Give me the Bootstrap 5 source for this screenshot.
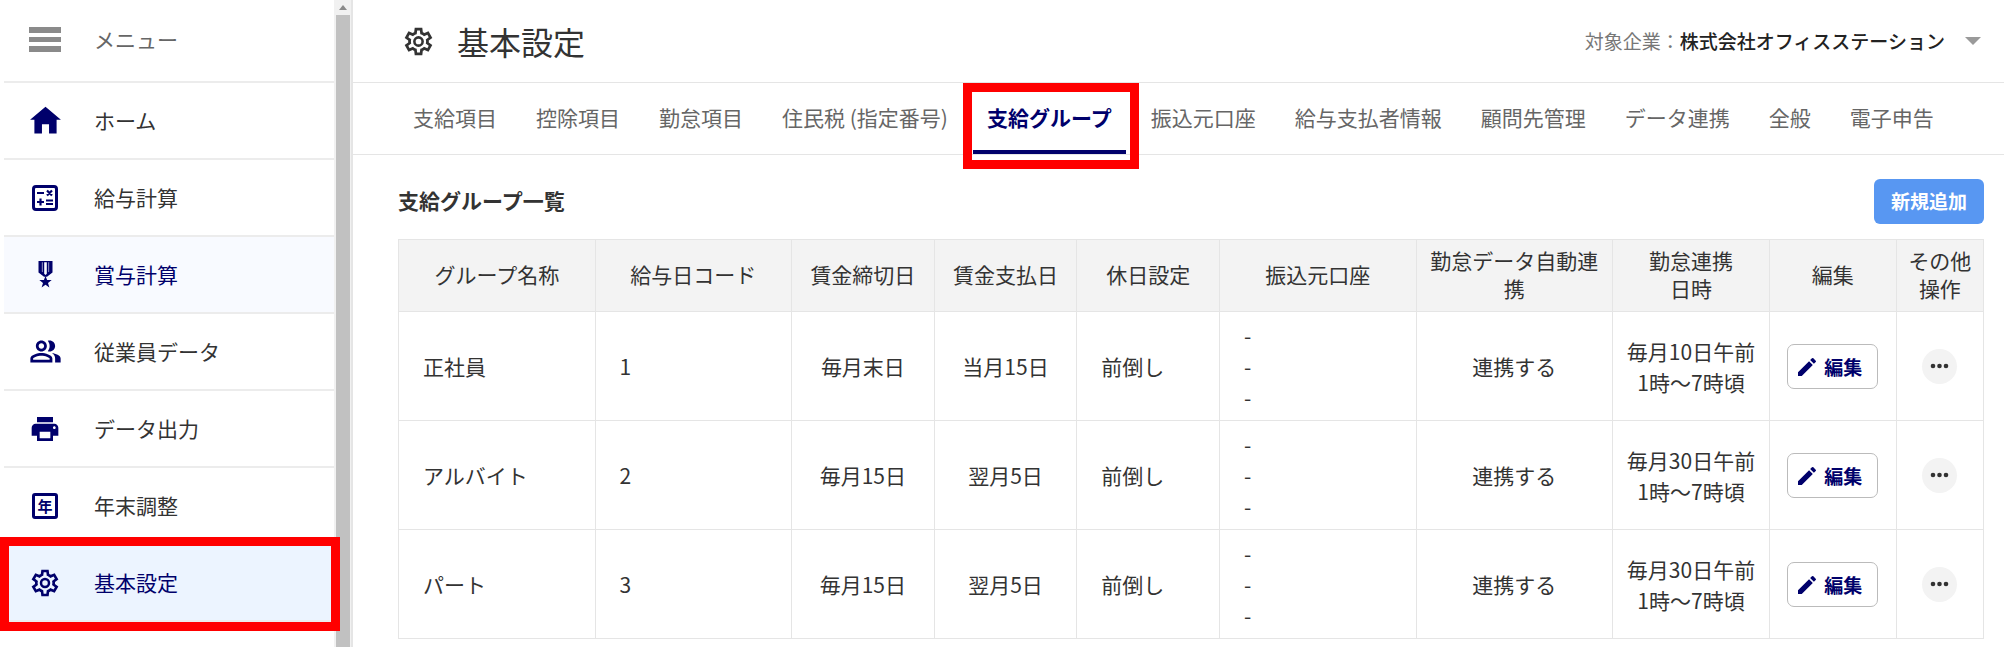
<!DOCTYPE html>
<html lang="ja">
<head>
<meta charset="utf-8">
<meta name="viewport" content="width=device-width, initial-scale=1">
<title>基本設定</title>
<link href="https://cdn.jsdelivr.net/npm/bootstrap@5.3.0/dist/css/bootstrap.min.css" rel="stylesheet">
<style>
  :root { --navy: #00006b; --line: #e5e5e5; --alert: #ff0000; }
  body { font-family: "Noto Sans CJK JP", "Noto Sans", sans-serif; font-size: 21px; line-height: 28px; color: #333; background: #fff; }
  svg { display: block; fill: currentColor; }

  /* sidebar */
  .side { width: 353px; border-right: 2px solid var(--line); }
  .side-list { padding-left: 4px; }
  .side-item { height: 77px; padding: 0 0 2px 22px; gap: 30px; border: 0; border-bottom: 2px solid #ececec; background: #fff; color: #333; text-decoration: none; text-align: left; }
  .side-item.side-top { height: 83px; padding-bottom: 4px; color: #666; }
  .side-item:hover, .side-item.is-hover { background: #f8faff; color: var(--navy); }
  .side-item.is-current { background: #ecf4ff; color: var(--navy); }
  .side-icon { width: 38px; padding-top: 2px; color: var(--navy); }
  .burger { width: 32px; height: 25px; color: #8a8a8a; }
  .year-icon { width: 26px; height: 26px; border: 3px solid var(--navy); border-radius: 3px; font-size: 15px; line-height: 19px; font-weight: 700; text-align: center; }
  .scroll-track { width: 17px; background: #f1f1f1; }
  .scroll-arrow { height: 15px; }
  .scroll-thumb { width: 14px; background: #c1c1c1; }

  /* red callout frames */
  .callout { position: absolute; border: 9px solid var(--alert); pointer-events: none; z-index: 2; }
  .callout-side { inset: -8px -6px -11px -4px; }
  .callout-tab { inset: 0 -13px -19px -10px; }

  /* header */
  .topbar { height: 83px; padding: 0 23px 0 49px; border-bottom: 1px solid var(--line); }
  .title-row { gap: 22px; }
  .page-title { font-size: 32px; line-height: 40px; font-weight: 400; color: #333; }
  .company { font-size: 19px; line-height: 28px; color: #777; }
  .company-name { color: #222; font-weight: 500; }

  /* tabs */
  .tabs { height: 72px; padding-left: 46px; gap: 11px; border-bottom: 1px solid var(--line); }
  .tab-link { padding: 0 14px 4px; color: #666; text-decoration: none; white-space: nowrap; }
  .tab-link.is-current { color: var(--navy); font-weight: 700; border-bottom: 4px solid var(--navy); padding-bottom: 0; }

  /* content */
  .content { padding: 24px 20px 0 45px; }
  .list-head { margin-bottom: 15px; }
  .list-title { font-size: 21px; line-height: 28px; font-weight: 700; padding-bottom: 3px; }
  .btn-add { height: 45px; padding: 0 17px 2px; border: 0; border-radius: 6px; background: #5897f2; color: #fff; font-size: 19px; line-height: 28px; font-weight: 700; }
  .btn-add:hover { background: #4585e0; color: #fff; }
  .grid-table { table-layout: fixed; border-collapse: collapse; color: #333; }
  .grid-table th, .grid-table td { border: 1px solid var(--line); vertical-align: middle; }
  .grid-table th { background: #f3f3f3; font-weight: 400; text-align: center; padding: 6px 12px 9px; }
  .grid-table td { padding: 8px 12px 7px; line-height: 31px; text-align: center; }
  .grid-table td.cell-start { padding-left: 24px; text-align: left; }
  .grid-table th.cell-tight, .grid-table td.cell-tight { padding-left: 4px; padding-right: 4px; }
  .w-name { width: 12.4%; } .w-day { width: 9%; } .w-time { width: 9.9%; } .w-edit { width: 8%; } .w-more { width: 5.5%; }
  .btn-edit { height: 45px; padding: 0 15px 0 7px; gap: 5px; border: 1px solid #bbb; border-radius: 7px; background: #fff; color: var(--navy); font-size: 19px; line-height: 28px; font-weight: 700; }
  .btn-edit:hover { background: #f8faff; color: var(--navy); border-color: #bbb; }
  .btn-more { width: 35px; height: 35px; padding: 0; border: 0; background: #f3f3f3; color: #333; }
</style>
</head>
<body>
<svg class="d-none" xmlns="http://www.w3.org/2000/svg">
  <symbol id="i-gear" viewBox="0 -960 960 960">
    <path fill-rule="evenodd" d="m370-80-16-128q-13-5-24.500-12T307-235l-119 50L78-375l103-78q-1-7-1-13.500v-27q0-6.500 1-13.500L78-585l110-190 119 50q11-8 23-15t24-12l16-128h220l16 128q13 5 24.500 12t22.500 15l119-50 110 190-103 78q1 7 1 13.500v27q0 6.500-2 13.500l103 78-110 190-118-50q-11 8-23 15t-24 12L590-80H370Zm70-80h79l14-106q31-8 57.500-23.500T639-327l99 41 39-68-86-65q5-14 7-29.500t2-31.500q0-16-2-31.500t-7-29.500l86-65-39-68-99 42q-22-23-48.500-38.500T533-694l-13-106h-79l-14 106q-31 8-57.500 23.500T321-633l-99-41-39 68 86 64q-5 15-7 30t-2 32q0 16 2 31t7 30l-86 65 39 68 99-42q22 23 48.500 38.500T427-266l13 106Z"/>
    <circle cx="480" cy="-480" r="120" fill="none" stroke="currentColor" stroke-width="75"/>
  </symbol>
  <symbol id="i-pen" viewBox="0 0 24 24"><path d="M3 17.250V21h3.750L17.810 9.940l-3.750-3.750L3 17.250zM20.710 7.040a1 1 0 000-1.410l-2.340-2.340a1 1 0 00-1.410 0l-1.830 1.830 3.750 3.750 1.830-1.830z"/></symbol>
  <symbol id="i-dots" viewBox="0 0 35 35"><circle cx="11" cy="17" r="2.300"/><circle cx="17.500" cy="17" r="2.300"/><circle cx="24" cy="17" r="2.300"/></symbol>
</svg>

<div class="d-flex min-vh-100">
  <aside class="side d-flex flex-shrink-0">
    <nav class="side-list flex-grow-1" aria-label="メインメニュー">
      <button type="button" class="side-item side-top d-flex align-items-center w-100">
        <span class="side-icon d-flex justify-content-center">
          <svg class="burger" viewBox="0 0 32 25"><path d="M0 0h32v6H0zM0 10h32v5H0zM0 19h32v6H0z"/></svg>
        </span>メニュー
      </button>
      <a href="#" class="side-item d-flex align-items-center">
        <span class="side-icon d-flex justify-content-center"><svg width="37" height="37" viewBox="0 0 24 24"><path d="M9.700 20.500v-6h4.600v6H19.200v-9H22L12 3 2 11.500h2.800v9z"/></svg></span>ホーム
      </a>
      <a href="#" class="side-item d-flex align-items-center">
        <span class="side-icon d-flex justify-content-center"><svg width="26" height="26" viewBox="0 0 26 26" fill="none" stroke="currentColor" stroke-width="2"><rect x="1.500" y="1.500" width="23" height="23" rx="2.500" fill="none" stroke-width="3"/><path d="M5 8h7M15 5.500l5 5M20 5.500l-5 5M8.500 13.500v7M5 17h7M14 15.500h7M14 19h7" stroke-width="2.200"/></svg></span>給与計算
      </a>
      <a href="#" class="side-item is-hover d-flex align-items-center">
        <span class="side-icon d-flex justify-content-center"><svg width="15" height="28" viewBox="0 0 15 28"><path fill-rule="evenodd" d="M.5 0h14v11.500L9 15.800H6L.5 11.500zM6.200 1.200v11.600L7.500 14l1.300-1.200V1.200zM3.900 1.200h.6v10l-.6-.5zM10.500 1.200h.6v9.500l-.6.500z"/><path d="M7.500 15l1.600 4h4.600l-3.700 2.900 1.400 4.700-3.900-2.800-3.900 2.800L5 21.900 1.300 19h4.600z"/></svg></span>賞与計算
      </a>
      <a href="#" class="side-item d-flex align-items-center">
        <span class="side-icon d-flex justify-content-center"><svg width="33" height="33" viewBox="0 0 24 24"><path fill-rule="evenodd" d="M16.670 13.130C18.040 14.060 19 15.320 19 17v3h4v-3c0-2.180-3.570-3.470-6.330-3.870zM15 12c2.210 0 4-1.790 4-4s-1.790-4-4-4c-.47 0-.91.1-1.330.24C14.500 5.270 15 6.580 15 8s-.5 2.730-1.330 3.760c.42.14.86.24 1.330.24zM9 12c2.210 0 4-1.790 4-4s-1.790-4-4-4-4 1.790-4 4 1.790 4 4 4zm0-6c1.100 0 2 .9 2 2s-.9 2-2 2-2-.9-2-2 .9-2 2-2zm0 7c-2.670 0-8 1.340-8 4v3h16v-3c0-2.660-5.330-4-8-4zm6 5H3v-.99C3.200 16.290 6.300 15 9 15s5.800 1.290 6 2v1z"/></svg></span>従業員データ
      </a>
      <a href="#" class="side-item d-flex align-items-center">
        <span class="side-icon d-flex justify-content-center"><svg width="32" height="32" viewBox="0 0 24 24"><path fill-rule="evenodd" d="M19 8H5c-1.660 0-3 1.340-3 3v6h4v4h12v-4h4v-6c0-1.660-1.340-3-3-3zm-3 11H8v-5h8v5zm3-7c-.55 0-1-.45-1-1s.45-1 1-1 1 .45 1 1-.45 1-1 1zm-1-9H6v4h12V3z"/></svg></span>データ出力
      </a>
      <a href="#" class="side-item d-flex align-items-center">
        <span class="side-icon d-flex justify-content-center"><span class="year-icon">年</span></span>年末調整
      </a>
      <a href="#" class="side-item is-current d-flex align-items-center position-relative" aria-current="page">
        <span class="side-icon d-flex justify-content-center"><svg width="32" height="32"><use href="#i-gear"/></svg></span>基本設定
        <span class="callout callout-side"></span>
      </a>
    </nav>
    <div class="scroll-track d-flex flex-column align-items-center" aria-hidden="true">
      <div class="scroll-arrow d-flex align-items-center"><svg width="8" height="5" viewBox="0 0 8 5" color="#8a8a8a"><path d="M4 0l4 5H0z"/></svg></div>
      <div class="scroll-thumb flex-grow-1"></div>
    </div>
  </aside>

  <main class="flex-grow-1 overflow-hidden">
    <header class="topbar d-flex align-items-center justify-content-between">
      <div class="title-row d-flex align-items-center">
        <svg width="33" height="33"><use href="#i-gear"/></svg>
        <h1 class="page-title mb-0">基本設定</h1>
      </div>
      <button type="button" class="company btn border-0 p-0 d-flex align-items-center">
        <span>対象企業：</span><span class="company-name me-3">株式会社オフィスステーション</span>
        <svg class="ms-1" width="16" height="8" viewBox="0 0 16 8" color="#9a9a9a"><path d="M0 0h16L8 8z"/></svg>
      </button>
    </header>

    <nav class="tabs d-flex align-items-stretch" aria-label="設定">
      <a href="#" class="tab-link d-flex align-items-center">支給項目</a>
      <a href="#" class="tab-link d-flex align-items-center">控除項目</a>
      <a href="#" class="tab-link d-flex align-items-center">勤怠項目</a>
      <a href="#" class="tab-link d-flex align-items-center">住民税 (指定番号)</a>
      <a href="#" class="tab-link is-current d-flex align-items-center position-relative" aria-current="page">支給グループ<span class="callout callout-tab"></span></a>
      <a href="#" class="tab-link d-flex align-items-center">振込元口座</a>
      <a href="#" class="tab-link d-flex align-items-center">給与支払者情報</a>
      <a href="#" class="tab-link d-flex align-items-center">顧問先管理</a>
      <a href="#" class="tab-link d-flex align-items-center">データ連携</a>
      <a href="#" class="tab-link d-flex align-items-center">全般</a>
      <a href="#" class="tab-link d-flex align-items-center">電子申告</a>
    </nav>

    <section class="content">
      <div class="list-head d-flex align-items-center justify-content-between">
        <h2 class="list-title mb-0">支給グループ一覧</h2>
        <button type="button" class="btn btn-add">新規追加</button>
      </div>
      <table class="grid-table w-100">
        <colgroup>
          <col class="w-name"><col class="w-name"><col class="w-day"><col class="w-day"><col class="w-day"><col class="w-name"><col class="w-name"><col class="w-time"><col class="w-edit"><col class="w-more">
        </colgroup>
        <thead>
          <tr>
            <th scope="col">グループ名称</th><th scope="col">給与日コード</th><th scope="col">賃金締切日</th><th scope="col">賃金支払日</th><th scope="col">休日設定</th><th scope="col">振込元口座</th><th scope="col">勤怠データ自動連携</th><th scope="col">勤怠連携<br>日時</th><th scope="col">編集</th><th scope="col" class="cell-tight">その他<br>操作</th>
          </tr>
        </thead>
        <tbody>
          <tr>
            <td class="cell-start">正社員</td><td class="cell-start">1</td><td>毎月末日</td><td>当月15日</td><td class="cell-start">前倒し</td><td class="cell-start">-<br>-<br>-</td><td>連携する</td><td>毎月10日午前<br>1時～7時頃</td>
            <td><button type="button" class="btn btn-edit d-inline-flex align-items-center"><svg width="24" height="24"><use href="#i-pen"/></svg>編集</button></td>
            <td class="cell-tight"><button type="button" class="btn btn-more rounded-circle" aria-label="その他操作"><svg width="35" height="35"><use href="#i-dots"/></svg></button></td>
          </tr>
          <tr>
            <td class="cell-start">アルバイト</td><td class="cell-start">2</td><td>毎月15日</td><td>翌月5日</td><td class="cell-start">前倒し</td><td class="cell-start">-<br>-<br>-</td><td>連携する</td><td>毎月30日午前<br>1時～7時頃</td>
            <td><button type="button" class="btn btn-edit d-inline-flex align-items-center"><svg width="24" height="24"><use href="#i-pen"/></svg>編集</button></td>
            <td class="cell-tight"><button type="button" class="btn btn-more rounded-circle" aria-label="その他操作"><svg width="35" height="35"><use href="#i-dots"/></svg></button></td>
          </tr>
          <tr>
            <td class="cell-start">パート</td><td class="cell-start">3</td><td>毎月15日</td><td>翌月5日</td><td class="cell-start">前倒し</td><td class="cell-start">-<br>-<br>-</td><td>連携する</td><td>毎月30日午前<br>1時～7時頃</td>
            <td><button type="button" class="btn btn-edit d-inline-flex align-items-center"><svg width="24" height="24"><use href="#i-pen"/></svg>編集</button></td>
            <td class="cell-tight"><button type="button" class="btn btn-more rounded-circle" aria-label="その他操作"><svg width="35" height="35"><use href="#i-dots"/></svg></button></td>
          </tr>
        </tbody>
      </table>
    </section>
  </main>
</div>
<script src="https://cdn.jsdelivr.net/npm/bootstrap@5.3.0/dist/js/bootstrap.bundle.min.js"></script>
</body>
</html>
